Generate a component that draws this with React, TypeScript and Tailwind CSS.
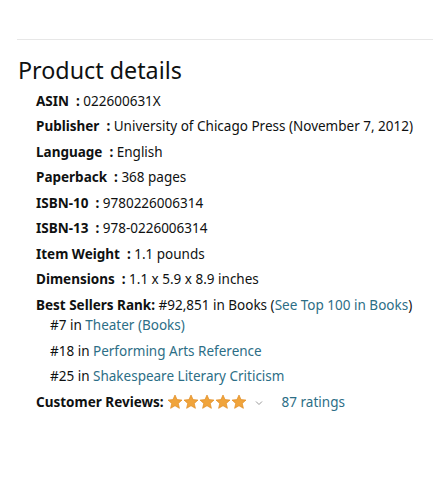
import React from "react";

const rows: [string, string][] = [
  ["ASIN", "022600631X"],
  ["Publisher", "University of Chicago Press (November 7, 2012)"],
  ["Language", "English"],
  ["Paperback", "368 pages"],
  ["ISBN-10", "9780226006314"],
  ["ISBN-13", "978-0226006314"],
  ["Item Weight", "1.1 pounds"],
  ["Dimensions", "1.1 x 5.9 x 8.9 inches"],
];

function Star() {
  return (
    <svg width="16" height="16" viewBox="0 0 24 24">
      <path
        d="M12 1.5l3.1 6.9 7.4.7-5.6 5 1.7 7.4L12 17.6l-6.6 3.9 1.7-7.4-5.6-5 7.4-.7z"
        fill="#f0a43c"
        stroke="#e08a1e"
        strokeWidth="1"
        strokeLinejoin="round"
      />
    </svg>
  );
}

export default function App() {
  return (
    <div
      className="w-[433px] h-[478px] bg-white text-[#0f1111] pt-[39px]"
      style={{ fontFamily: '"Noto Sans", "Open Sans", sans-serif' }}
    >
      <div className="ml-[17px] border-t border-[#e7e7e7]" />
      <h2 className="ml-[18px] mt-[15px] text-[23.3px] leading-[30px] text-[#0f1111]">Product details</h2>
      <div className="ml-[36px] mt-[3.5px] text-[13.5px] leading-[25.5px]">
        {rows.map(([k, v]) => (
          <div key={k} className="whitespace-nowrap">
            <span className="font-bold">{k}</span>
            <span className="font-bold">&nbsp; : </span>
            <span>{v}</span>
          </div>
        ))}
        <div className="whitespace-nowrap">
          <span className="font-bold">Best Sellers Rank:</span> #92,851 in Books (
          <span className="text-[#2c6e86]">See Top 100 in Books</span>)
        </div>
        <div className="ml-[14px] -mt-[5px]">
          <div>
            #7 in <span className="text-[#2c6e86]">Theater (Books)</span>
          </div>
          <div>
            #18 in <span className="text-[#2c6e86]">Performing Arts Reference</span>
          </div>
          <div>
            #25 in <span className="text-[#2c6e86]">Shakespeare Literary Criticism</span>
          </div>
        </div>
        <div className="flex items-center whitespace-nowrap">
          <span className="font-bold">Customer Reviews:</span>
          <span className="flex items-center ml-[3px]">
            <Star />
            <Star />
            <Star />
            <Star />
            <Star />
          </span>
          <svg width="8" height="6" viewBox="0 0 8 6" className="ml-[8px] mt-[1px]">
            <path d="M1 1.5l3 3 3-3" fill="none" stroke="#999" strokeWidth="1" />
          </svg>
          <span className="ml-[19px] text-[#2c6e86]">87 ratings</span>
        </div>
      </div>
    </div>
  );
}
